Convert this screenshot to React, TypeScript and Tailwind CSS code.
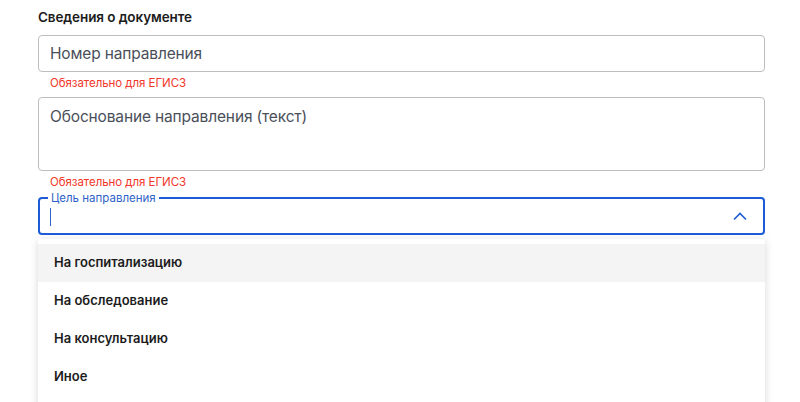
import { useState } from 'react';

const options = ['На госпитализацию', 'На обследование', 'На консультацию', 'Иное'];

function Hint() {
  return (
    <p className="mt-[3px] pl-3 text-[11.5px] leading-[16px] tracking-[-0.05px] text-[#f2362a]">
      Обязательно для ЕГИСЗ
    </p>
  );
}

export default function App() {
  const [active] = useState(0);

  return (
    <div className="w-[800px] h-[402px] overflow-hidden bg-white font-['Inter',sans-serif] text-[#1c1c1c]">
      <div className="ml-[38px] w-[727px] pt-[8px]">
        <h2 className="text-[13.5px] leading-[18px] font-semibold tracking-[-0.1px] mb-[9px]">Сведения о документе</h2>

        <div className="h-[37px] rounded-[4px] border border-[#bdbdbd] flex items-center px-[11px]">
          <span className="text-[15.5px] tracking-[-0.15px] text-[#4a4f5a]">Номер направления</span>
        </div>
        <Hint />

        <div className="mt-[6px] h-[74px] rounded-[4px] border border-[#bdbdbd] px-[11px] pt-[6px]">
          <span className="text-[15.5px] tracking-[-0.15px] text-[#4a4f5a]">Обоснование направления (текст)</span>
        </div>
        <Hint />

        <div className="relative mt-[7px] h-[38px] rounded-[4px] border-2 border-[#1d5cd6] flex items-center px-[10px]">
          <span className="absolute -top-[9px] left-[8px] bg-white px-[3px] text-[11.5px] leading-[16px] text-[#2f63c9]">
            Цель направления
          </span>
          <span className="mt-[2px] w-px h-[18px] bg-[#2f63c9]" />
          <svg className="ml-auto mr-[5px]" width="16" height="10" viewBox="0 0 16 10" fill="none">
            <path d="M2 8.5 8 2.5l6 6" stroke="#1d5cd6" strokeWidth="1.6" />
          </svg>
        </div>

        <ul className="mt-[4px] h-[200px] bg-white shadow-[0_2px_8px_rgba(0,0,0,0.16)] pt-[5px]">
          {options.map((o, i) => (
            <li
              key={o}
              className={
                'h-[38px] flex items-center pl-[16px] text-[13px] font-semibold ' +
                (i === active ? 'bg-[#f4f4f4]' : '')
              }
            >
              {o}
            </li>
          ))}
        </ul>
      </div>
    </div>
  );
}
